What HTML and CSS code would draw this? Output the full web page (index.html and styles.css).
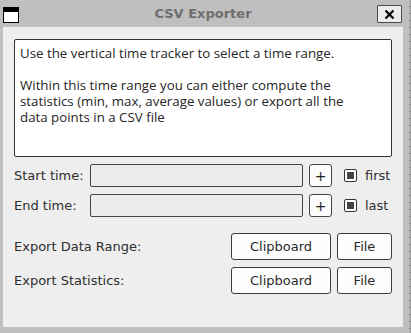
FILE: index.html
```html
<!DOCTYPE html>
<html>
<head>
<meta charset="utf-8">
<link rel="stylesheet" href="styles.css">
</head>
<body>
<div class="screen">
  <div class="window">
    <div class="titlebar">
      <div class="win-icon"></div>
      <div class="title">CSV Exporter</div>
      <div class="close">
        <svg width="11" height="11" viewBox="0 0 11 11"><path d="M1.5 1.5 L9.5 9.5 M9.5 1.5 L1.5 9.5" stroke="#000" stroke-width="2.2" fill="none"/></svg>
      </div>
    </div>
    <div class="content">
      <div class="info">
        <p>Use the vertical time tracker to select a time range.</p>
        <p>Within this time range you can either compute the statistics (min, max, average values) or export all the data points in a CSV file</p>
      </div>
      <div class="time-row">
        <span class="label">Start time:</span>
        <div class="field"></div>
        <div class="plus">+</div>
        <div class="check"><div class="check-fill"></div></div>
        <span class="check-label">first</span>
      </div>
      <div class="time-row">
        <span class="label">End time:</span>
        <div class="field"></div>
        <div class="plus">+</div>
        <div class="check"><div class="check-fill"></div></div>
        <span class="check-label">last</span>
      </div>
      <div class="export-row first-export">
        <span class="label grow">Export Data Range:</span>
        <div class="btn clip">Clipboard</div>
        <div class="btn file">File</div>
      </div>
      <div class="export-row">
        <span class="label grow">Export Statistics:</span>
        <div class="btn clip">Clipboard</div>
        <div class="btn file">File</div>
      </div>
    </div>
  </div>
  <div class="backdrop"></div>
</div>
</body>
</html>
```

FILE: styles.css
```css
html, body {
  margin: 0;
  padding: 0;
}
body {
  background: #bfbfbf;
  font-family: "DejaVu Sans", sans-serif;
  font-size: 13px;
  color: #2e2e2e;
}
.screen {
  display: flex;
  width: 411px;
  height: 333px;
  overflow: hidden;
}
.window {
  width: 409px;
  height: 333px;
  background: #bfbfbf;
  display: flex;
  flex-direction: column;
}
.backdrop {
  width: 2px;
  height: 333px;
  background: repeating-linear-gradient(to bottom, #a9a9a9 0, #a9a9a9 6px, #8a8a8a 6px, #8a8a8a 7px);
}
.titlebar {
  height: 27px;
  display: flex;
  align-items: flex-start;
}
.win-icon {
  width: 14px;
  height: 10px;
  margin: 7px 0 0 3px;
  border: 1px solid #000;
  border-top: 5px solid #000;
  background: #fff;
}
.title {
  flex: 1;
  text-align: center;
  font-weight: bold;
  font-size: 13px;
  color: #6e6e6e;
  line-height: 16px;
  margin-top: 6px;
  padding-left: 10px;
}
.close {
  width: 23px;
  height: 16px;
  margin: 5px 7px 0 0;
  border: 1px solid #4a4a4a;
  border-radius: 1px;
  background: #ececec;
  display: flex;
  align-items: center;
  justify-content: center;
}
.close svg { display: block; }
.content {
  width: 378px;
  height: 288px;
  margin-left: 3px;
  padding: 12px 11px 0 11px;
  background: #eeeeee;
}
.info {
  height: 106px;
  background: #fff;
  border: 1px solid #333;
  border-radius: 2px;
  padding: 5px 20px 5px 5px;
  font-family: "Open Sans", "Noto Sans", sans-serif;
  font-size: 13.3px;
  line-height: 16px;
  color: #262626;
}
.info p {
  margin: 0 0 16px 0;
}
.time-row {
  display: flex;
  align-items: center;
  height: 23px;
  margin-top: 7px;
}
.label {
  width: 76px;
  flex: none;
  white-space: nowrap;
}
.label.grow {
  flex: 1;
  width: auto;
}
.field {
  width: 211px;
  height: 21px;
  border: 1px solid #444;
  border-radius: 2px;
  background: #ececec;
}
.plus {
  width: 21px;
  height: 21px;
  margin-left: 6px;
  border: 1px solid #444;
  border-radius: 3px;
  background: #fcfcfc;
  display: flex;
  align-items: center;
  justify-content: center;
  font-size: 14px;
  color: #222;
}
.check {
  width: 11px;
  height: 11px;
  margin-left: 12px;
  border: 1px solid #333;
  border-radius: 2px;
  background: #fff;
  display: flex;
  align-items: center;
  justify-content: center;
}
.check-fill {
  width: 7px;
  height: 7px;
  background: #444;
}
.check-label {
  margin-left: 8px;
}
.export-row {
  display: flex;
  align-items: center;
  height: 27px;
  margin-top: 7px;
}
.first-export {
  margin-top: 16px;
}
.btn {
  height: 25px;
  border: 1px solid #3c3c3c;
  border-radius: 3px;
  background: #fdfdfd;
  display: flex;
  align-items: center;
  justify-content: center;
  color: #2a2a2a;
}
.clip {
  width: 98px;
}
.file {
  width: 53px;
  margin-left: 6px;
}
```
